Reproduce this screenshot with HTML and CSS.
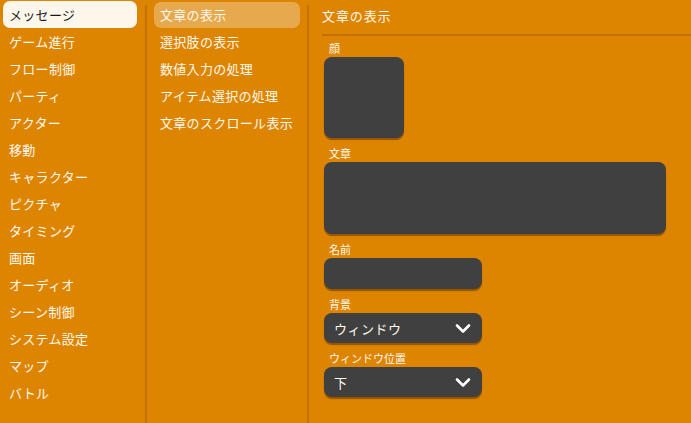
FILE: index.html
```html
<!DOCTYPE html>
<html lang="ja">
<head>
<meta charset="utf-8">
<link rel="stylesheet" href="styles.css">
</head>
<body>
<div class="app">
  <nav class="cats">
    <div class="cat active">メッセージ</div>
    <div class="cat">ゲーム進行</div>
    <div class="cat">フロー制御</div>
    <div class="cat">パーティ</div>
    <div class="cat">アクター</div>
    <div class="cat">移動</div>
    <div class="cat">キャラクター</div>
    <div class="cat">ピクチャ</div>
    <div class="cat">タイミング</div>
    <div class="cat">画面</div>
    <div class="cat">オーディオ</div>
    <div class="cat">シーン制御</div>
    <div class="cat">システム設定</div>
    <div class="cat">マップ</div>
    <div class="cat">バトル</div>
  </nav>
  <div class="divider"></div>
  <nav class="cmds">
    <div class="cmd active">文章の表示</div>
    <div class="cmd">選択肢の表示</div>
    <div class="cmd">数値入力の処理</div>
    <div class="cmd">アイテム選択の処理</div>
    <div class="cmd">文章のスクロール表示</div>
  </nav>
  <div class="divider"></div>
  <main class="panel">
    <div class="title">文章の表示</div>
    <div class="fields">
      <div class="field">
        <div class="label">顔</div>
        <div class="box face"></div>
      </div>
      <div class="field">
        <div class="label">文章</div>
        <div class="box text"></div>
      </div>
      <div class="field">
        <div class="label">名前</div>
        <div class="box name"></div>
      </div>
      <div class="field">
        <div class="label">背景</div>
        <div class="box select"><span>ウィンドウ</span>
          <svg class="chev" width="16" height="11" viewBox="0 0 16 11"><path d="M2 2.5 L8 8.5 L14 2.5" fill="none" stroke="#fff" stroke-width="2.6" stroke-linecap="round" stroke-linejoin="round"/></svg>
        </div>
      </div>
      <div class="field">
        <div class="label">ウィンドウ位置</div>
        <div class="box select"><span>下</span>
          <svg class="chev" width="16" height="11" viewBox="0 0 16 11"><path d="M2 2.5 L8 8.5 L14 2.5" fill="none" stroke="#fff" stroke-width="2.6" stroke-linecap="round" stroke-linejoin="round"/></svg>
        </div>
      </div>
    </div>
  </main>
</div>
</body>
</html>
```

FILE: styles.css
```css
html, body {
  margin: 0;
  padding: 0;
  height: 100%;
}
body {
  background: #dd8500;
  font-family: "Noto Sans CJK JP", "Noto Sans", sans-serif;
  font-weight: 400;
  color: #fff8ee;
  font-size: 13px;
  overflow: hidden;
}
.app {
  display: grid;
  grid-template-columns: 145px 2px 160px 2px 1fr;
  height: 423px;
}
.divider {
  background: #c27000;
  margin-top: 5px;
}
.cats {
  padding: 1px 8px 0 3px;
  display: flex;
  flex-direction: column;
}
.cat {
  height: 27px;
  line-height: 27px;
  padding-left: 6px;
  border-radius: 7px;
  letter-spacing: 0.3px;
  white-space: nowrap;
}
.cat.active {
  background: #fdf6ea;
  color: #1a1a1a;
}
.cmds {
  padding: 2px 7px 0 7px;
  display: flex;
  flex-direction: column;
  gap: 1px;
}
.cmd {
  height: 26px;
  line-height: 26px;
  padding-left: 6px;
  border-radius: 7px;
  letter-spacing: 0.3px;
  white-space: nowrap;
}
.cmd.active {
  background: rgba(255, 255, 255, 0.3);
}
.panel {
  display: flex;
  flex-direction: column;
}
.title {
  margin-left: 13px;
  height: 34px;
  line-height: 32px;
  border-bottom: 2px solid #c27000;
  letter-spacing: 0.9px;
}
.fields {
  padding: 5px 0 0 15px;
  display: flex;
  flex-direction: column;
  gap: 8px;
}
.label {
  font-size: 11px;
  line-height: 14px;
  height: 14px;
  padding-left: 5px;
  margin-bottom: 2px;
}
.box {
  background: #404040;
  border-radius: 8px;
  box-shadow: 0 1.5px 1px rgba(90, 45, 0, 0.55);
}
.face {
  width: 80px;
  height: 81px;
}
.text {
  width: 342px;
  height: 72px;
}
.name {
  width: 158px;
  height: 31px;
}
.select {
  width: 158px;
  height: 30px;
  display: flex;
  align-items: center;
  justify-content: space-between;
  padding: 0 10px;
  box-sizing: border-box;
  letter-spacing: 0.5px;
}
.chev {
  margin-right: 1px;
}
```
